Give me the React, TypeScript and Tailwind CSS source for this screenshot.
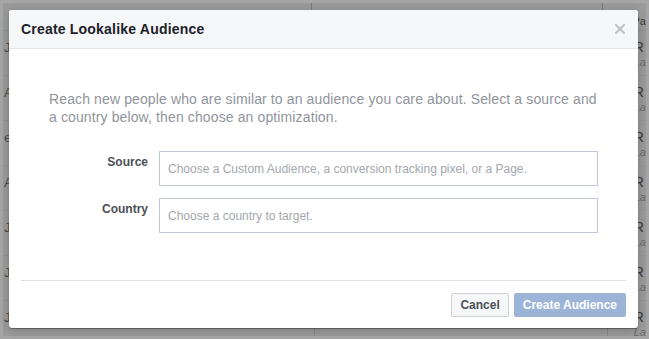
import React from 'react';

const ROWS = [
  { a: 'Jun', b: '' },
  { a: 'Ar', b: 'L' },
  { a: 'e', b: 'Ju' },
  { a: 'Ar', b: 'L' },
  { a: 'Jun', b: '' },
  { a: 'Jun', b: '' },
  { a: 'Jun', b: '' },
];

function BackdropPage() {
  return (
    <div className="w-full h-full bg-[#a6a6a6] p-[3px]">
      <div className="w-full h-full bg-[#9b9b9b] flex flex-col overflow-hidden text-[#444] text-[12px]">
        {/* header strip of the table underneath */}
        <div className="h-[28px] flex shrink-0 border-b border-[#8f8f8f]">
          <div className="w-[314px] border-r border-[#7c7c7c]" />
          <div className="w-[295px] border-r border-[#7c7c7c]" />
          <div className="flex-1 pl-[30px] pt-[10px] text-[11px] text-[#3c3c3c]">Pa</div>
        </div>
        {ROWS.map((r, i) => (
          <div key={i} className="h-[45px] flex shrink-0 border-b border-[#949494]">
            <div className="w-[314px] border-r border-[#8a8a8a] pl-[1px] pt-[9px] leading-[15px]">
              <div className="text-[13px] text-[#4a4a4a]">{r.a}</div>
              {r.b && <div className="pl-[5px] text-[#5c5c5c]">{r.b}</div>}
            </div>
            <div className="w-[295px] border-r border-[#8a8a8a]" />
            <div className="flex-1 pl-[26px] pt-[9px] leading-[15px]">
              <div className="text-[14px] text-[#3a3a3a]">R</div>
              <div className="italic text-[11px] text-[#6a6a6a]">La</div>
            </div>
          </div>
        ))}
      </div>
    </div>
  );
}

export default function App() {
  return (
    <div
      className="relative w-[649px] h-[339px] overflow-hidden"
      style={{ fontFamily: '"Liberation Sans", Arial, Helvetica, sans-serif' }}
    >
      <BackdropPage />

      {/* ── Dialog ── */}
      <div className="absolute left-[9px] top-[10px] w-[629px] h-[318px] bg-white rounded-[3px] flex flex-col overflow-hidden shadow-[0_1px_1px_rgba(0,0,0,0.35),0_2px_12px_rgba(0,0,0,0.2)]">
        {/* Header */}
        <div className="h-[39px] shrink-0 bg-[#f6f7f9] border-b border-[#e5e5e5] flex items-center justify-between pl-[12px] pr-[12px]">
          <h2 className="text-[14px] font-bold text-[#1d2129] leading-[18px] tracking-[0.2px]">Create Lookalike Audience</h2>
          <button className="w-[12px] h-[12px] flex items-center justify-center" aria-label="Close">
            <svg width="10" height="10" viewBox="0 0 10 10">
              <path d="M1 1 L9 9 M9 1 L1 9" stroke="#bec2c9" strokeWidth="2" strokeLinecap="square" />
            </svg>
          </button>
        </div>

        {/* Body */}
        <div className="flex-1 px-[40px] pt-[41px]">
          <p className="text-[14px] leading-[18px] text-[#90949c] tracking-[0.12px] whitespace-nowrap">
            Reach new people who are similar to an audience you care about. Select a source and
            <br />
            a country below, then choose an optimization.
          </p>

          <div className="mt-[25px] flex flex-col gap-[12px]">
            <div className="flex gap-[11px]">
              <label className="w-[99px] shrink-0 text-right text-[12px] font-bold text-[#4b4f56] leading-[16px] pt-[3px]">
                Source
              </label>
              <div className="w-[439px] h-[35px] border border-[#bdc7d8] flex items-center px-[8px] text-[12px] text-[#a3a7ae]">
                Choose a Custom Audience, a conversion tracking pixel, or a Page.
              </div>
            </div>
            <div className="flex gap-[11px]">
              <label className="w-[99px] shrink-0 text-right text-[12px] font-bold text-[#4b4f56] leading-[16px] pt-[3px]">
                Country
              </label>
              <div className="w-[439px] h-[35px] border border-[#bdc7d8] flex items-center px-[8px] text-[12px] text-[#a3a7ae]">
                Choose a country to target.
              </div>
            </div>
          </div>
        </div>

        {/* Footer */}
        <div className="h-[48px] shrink-0 mx-[12px] border-t border-[#dddfe2] pt-[12px] flex justify-end gap-[5px]">
          <button className="h-[24px] px-[8px] border border-[#ced0d4] bg-[#f6f7f9] rounded-[2px] text-[12px] font-bold text-[#4b4f56]">
            Cancel
          </button>
          <button className="h-[24px] px-[8px] border border-[#9cb4d8] bg-[#9cb4d8] rounded-[2px] text-[12px] font-bold text-white">
            Create Audience
          </button>
        </div>
      </div>
    </div>
  );
}
